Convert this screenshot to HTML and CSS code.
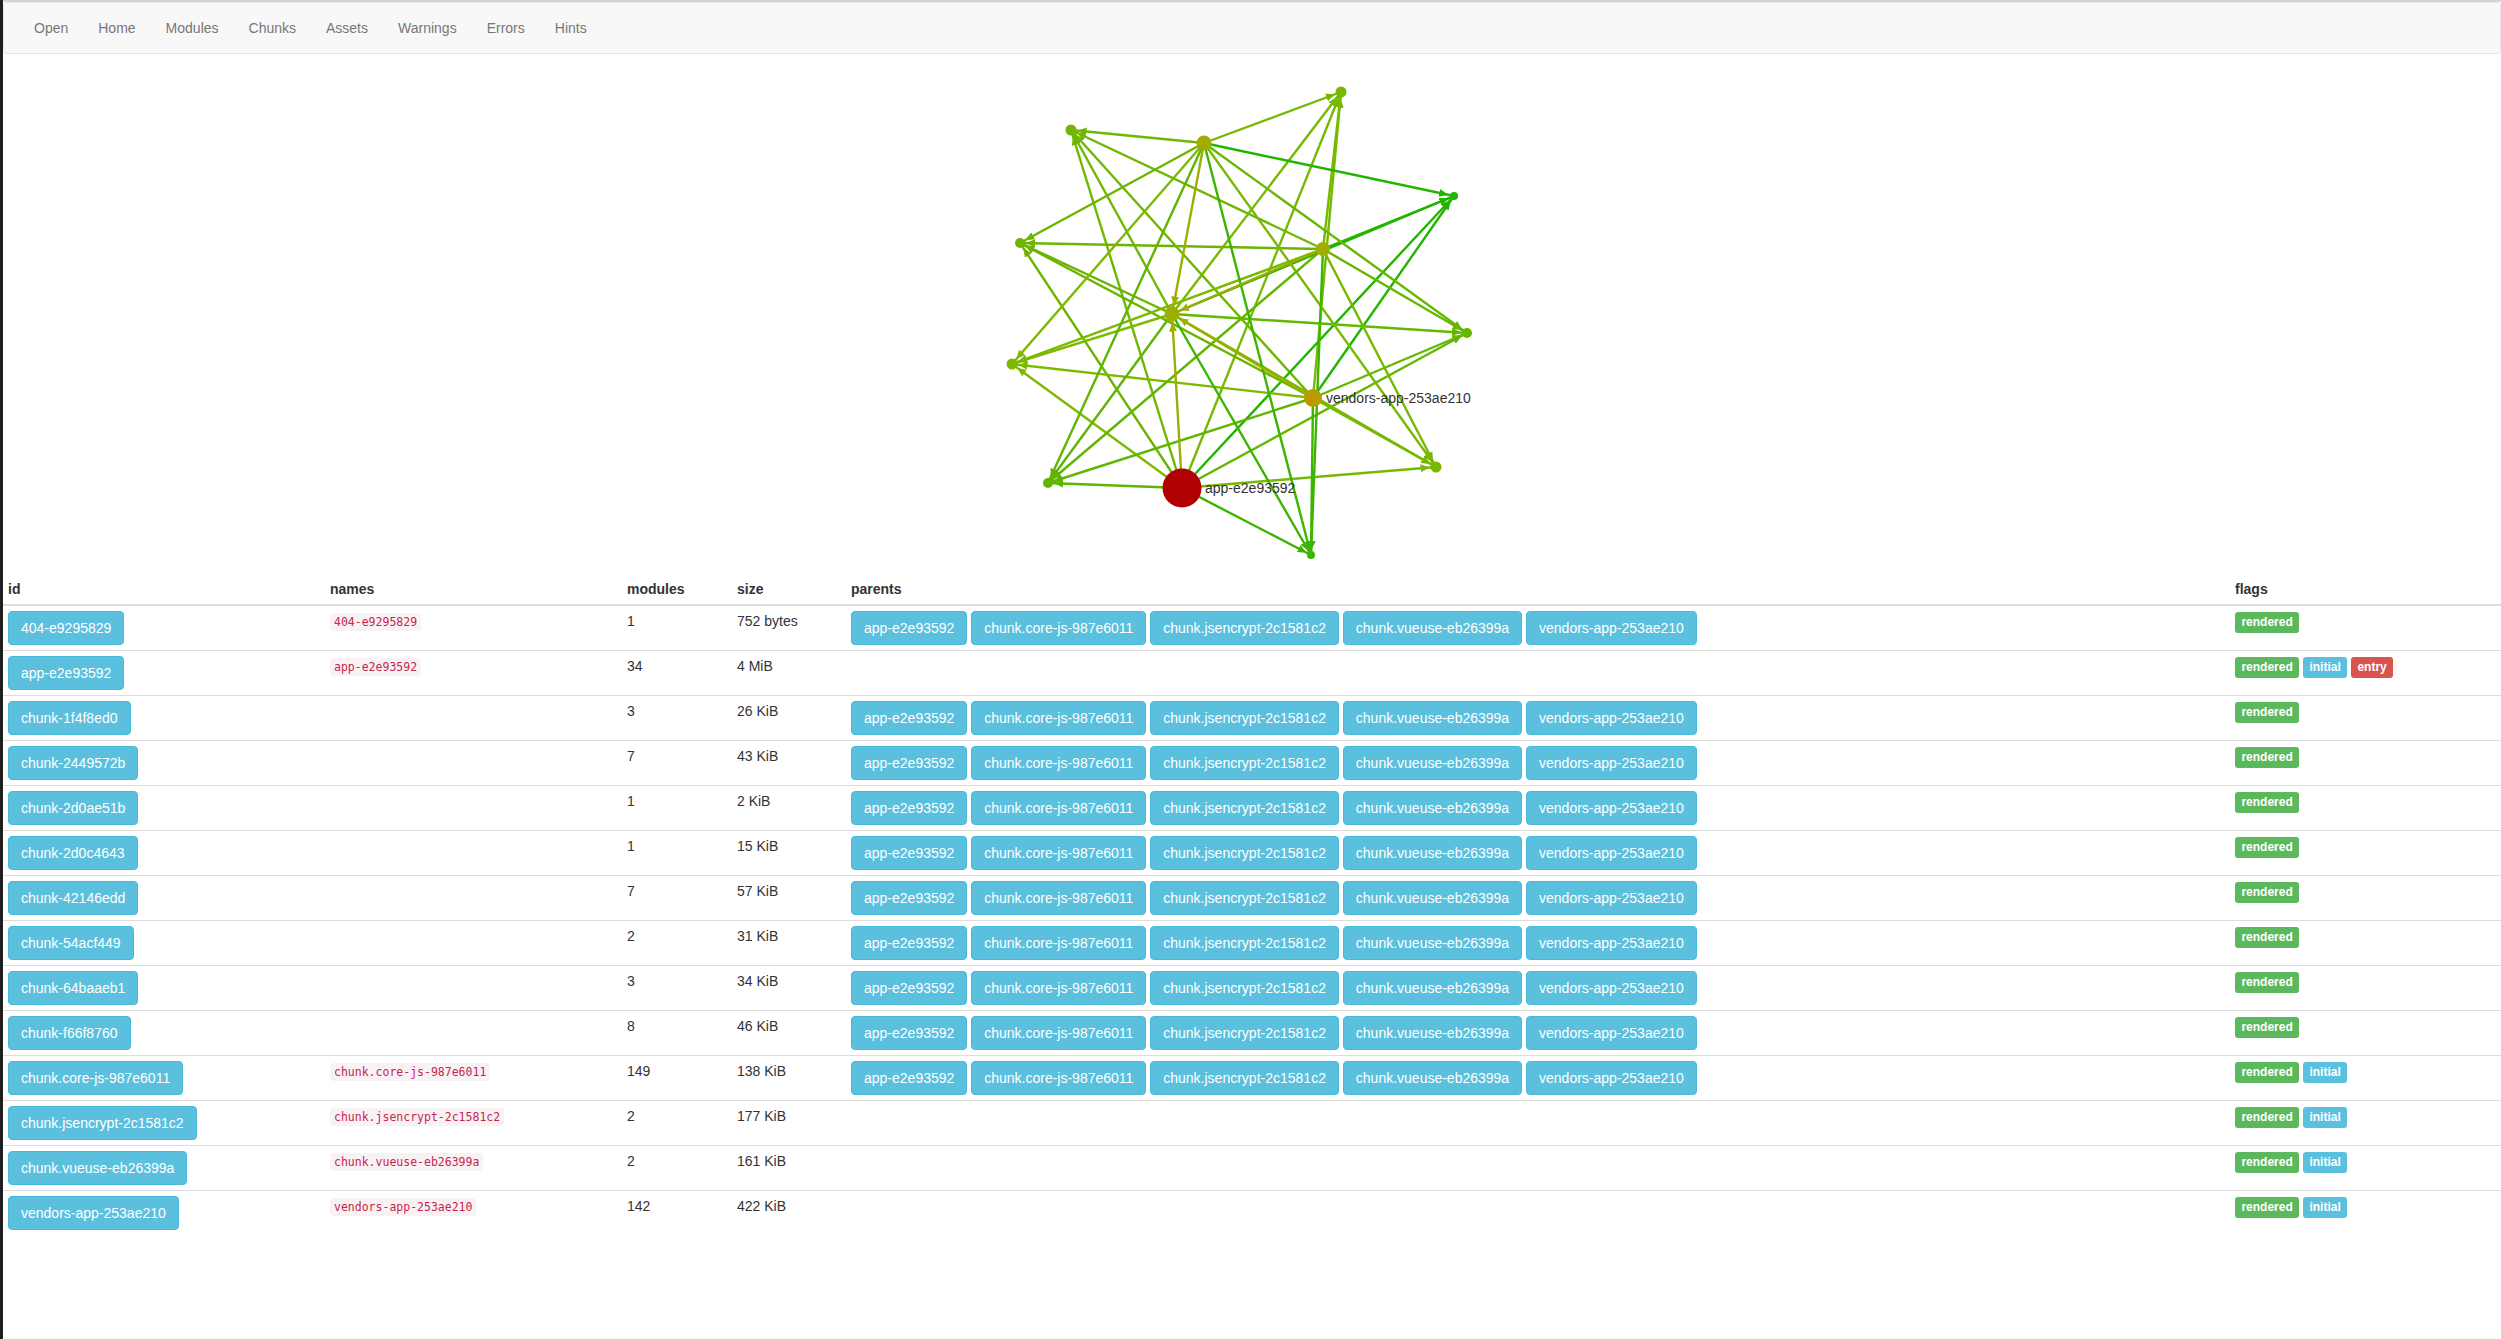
FILE: index.html
```html
<!DOCTYPE html>
<html lang="en">
<head>
    <meta charset="UTF-8">
    <meta name="viewport" content="width=device-width, initial-scale=1.0">
    <title>Chunks</title>
    <link rel="stylesheet" href="styles.css">
</head>
<body>
    <div class="top-line"></div>
    <nav class="navbar">
        <ul class="nav-list">
            <li><a href="#">Open</a></li>
            <li><a href="#">Home</a></li>
            <li><a href="#">Modules</a></li>
            <li><a href="#">Chunks</a></li>
            <li><a href="#">Assets</a></li>
            <li><a href="#">Warnings</a></li>
            <li><a href="#">Errors</a></li>
            <li><a href="#">Hints</a></li>
        </ul>
    </nav>

    <svg class="chart" width="2498" height="520" viewBox="3 54 2498 520">
        <defs>
            <marker id="arrow-n1" class="to-n1" markerUnits="userSpaceOnUse" markerWidth="10" markerHeight="10" viewBox="0 0 10 10" refX="15.5" refY="5" orient="auto"><path d="M0 1L9 5L0 9z"/></marker>
            <marker id="arrow-n2" class="to-n2" markerUnits="userSpaceOnUse" markerWidth="10" markerHeight="10" viewBox="0 0 10 10" refX="15.5" refY="5" orient="auto"><path d="M0 1L9 5L0 9z"/></marker>
            <marker id="arrow-n4" class="to-n4" markerUnits="userSpaceOnUse" markerWidth="10" markerHeight="10" viewBox="0 0 10 10" refX="15" refY="5" orient="auto"><path d="M0 1L9 5L0 9z"/></marker>
            <marker id="arrow-n5" class="to-n5" markerUnits="userSpaceOnUse" markerWidth="10" markerHeight="10" viewBox="0 0 10 10" refX="15" refY="5" orient="auto"><path d="M0 1L9 5L0 9z"/></marker>
            <marker id="arrow-n7" class="to-n7" markerUnits="userSpaceOnUse" markerWidth="10" markerHeight="10" viewBox="0 0 10 10" refX="15" refY="5" orient="auto"><path d="M0 1L9 5L0 9z"/></marker>
            <marker id="arrow-n8" class="to-n8" markerUnits="userSpaceOnUse" markerWidth="10" markerHeight="10" viewBox="0 0 10 10" refX="17.5" refY="5" orient="auto"><path d="M0 1L9 5L0 9z"/></marker>
            <marker id="arrow-n9" class="to-n9" markerUnits="userSpaceOnUse" markerWidth="10" markerHeight="10" viewBox="0 0 10 10" refX="15.5" refY="5" orient="auto"><path d="M0 1L9 5L0 9z"/></marker>
            <marker id="arrow-n11" class="to-n11" markerUnits="userSpaceOnUse" markerWidth="10" markerHeight="10" viewBox="0 0 10 10" refX="15.5" refY="5" orient="auto"><path d="M0 1L9 5L0 9z"/></marker>
            <marker id="arrow-n12" class="to-n12" markerUnits="userSpaceOnUse" markerWidth="10" markerHeight="10" viewBox="0 0 10 10" refX="15" refY="5" orient="auto"><path d="M0 1L9 5L0 9z"/></marker>
            <marker id="arrow-n14" class="to-n14" markerUnits="userSpaceOnUse" markerWidth="10" markerHeight="10" viewBox="0 0 10 10" refX="14" refY="5" orient="auto"><path d="M0 1L9 5L0 9z"/></marker>
        </defs>

        <!-- edges grouped by target, colour comes from the target -->
        <g class="edges to-n1" marker-end="url(#arrow-n1)">
            <line x1="1182" y1="488" x2="1341" y2="92"/>
            <line x1="1313" y1="398" x2="1341" y2="92"/>
            <line x1="1172" y1="314" x2="1341" y2="92"/>
            <line x1="1204" y1="143" x2="1341" y2="92"/>
            <line x1="1323" y1="249" x2="1341" y2="92"/>
        </g>
        <g class="edges to-n2" marker-end="url(#arrow-n2)">
            <line x1="1182" y1="488" x2="1071" y2="130"/>
            <line x1="1313" y1="398" x2="1071" y2="130"/>
            <line x1="1172" y1="314" x2="1071" y2="130"/>
            <line x1="1204" y1="143" x2="1071" y2="130"/>
            <line x1="1323" y1="249" x2="1071" y2="130"/>
        </g>
        <g class="edges to-n4" marker-end="url(#arrow-n4)">
            <line x1="1182" y1="488" x2="1454" y2="196"/>
            <line x1="1313" y1="398" x2="1454" y2="196"/>
            <line x1="1172" y1="314" x2="1454" y2="196"/>
            <line x1="1204" y1="143" x2="1454" y2="196"/>
            <line x1="1323" y1="249" x2="1454" y2="196"/>
        </g>
        <g class="edges to-n5" marker-end="url(#arrow-n5)">
            <line x1="1182" y1="488" x2="1020" y2="243"/>
            <line x1="1313" y1="398" x2="1020" y2="243"/>
            <line x1="1172" y1="314" x2="1020" y2="243"/>
            <line x1="1204" y1="143" x2="1020" y2="243"/>
            <line x1="1323" y1="249" x2="1020" y2="243"/>
        </g>
        <g class="edges to-n7" marker-end="url(#arrow-n7)">
            <line x1="1182" y1="488" x2="1467" y2="333"/>
            <line x1="1313" y1="398" x2="1467" y2="333"/>
            <line x1="1172" y1="314" x2="1467" y2="333"/>
            <line x1="1204" y1="143" x2="1467" y2="333"/>
            <line x1="1323" y1="249" x2="1467" y2="333"/>
        </g>
        <g class="edges to-n9" marker-end="url(#arrow-n9)">
            <line x1="1182" y1="488" x2="1012" y2="364"/>
            <line x1="1313" y1="398" x2="1012" y2="364"/>
            <line x1="1172" y1="314" x2="1012" y2="364"/>
            <line x1="1204" y1="143" x2="1012" y2="364"/>
            <line x1="1323" y1="249" x2="1012" y2="364"/>
        </g>
        <g class="edges to-n11" marker-end="url(#arrow-n11)">
            <line x1="1182" y1="488" x2="1436" y2="467"/>
            <line x1="1313" y1="398" x2="1436" y2="467"/>
            <line x1="1172" y1="314" x2="1436" y2="467"/>
            <line x1="1204" y1="143" x2="1436" y2="467"/>
            <line x1="1323" y1="249" x2="1436" y2="467"/>
        </g>
        <g class="edges to-n12" marker-end="url(#arrow-n12)">
            <line x1="1182" y1="488" x2="1048" y2="483"/>
            <line x1="1313" y1="398" x2="1048" y2="483"/>
            <line x1="1172" y1="314" x2="1048" y2="483"/>
            <line x1="1204" y1="143" x2="1048" y2="483"/>
            <line x1="1323" y1="249" x2="1048" y2="483"/>
        </g>
        <g class="edges to-n14" marker-end="url(#arrow-n14)">
            <line x1="1182" y1="488" x2="1311" y2="555"/>
            <line x1="1313" y1="398" x2="1311" y2="555"/>
            <line x1="1172" y1="314" x2="1311" y2="555"/>
            <line x1="1204" y1="143" x2="1311" y2="555"/>
            <line x1="1323" y1="249" x2="1311" y2="555"/>
        </g>
        <g class="edges to-n8" marker-end="url(#arrow-n8)">
            <line x1="1182" y1="488" x2="1172" y2="314"/>
            <line x1="1313" y1="398" x2="1172" y2="314"/>
            <line x1="1204" y1="143" x2="1172" y2="314"/>
            <line x1="1323" y1="249" x2="1172" y2="314"/>
        </g>

        <circle class="to-n1" cx="1341" cy="92" r="5.5"/>
        <circle class="to-n2" cx="1071" cy="130" r="5.5"/>
        <circle class="node-n3" cx="1204" cy="143" r="7.5"/>
        <circle class="to-n4" cx="1454" cy="196" r="4"/>
        <circle class="to-n5" cx="1020" cy="243" r="5"/>
        <circle class="node-n6" cx="1323" cy="249" r="7"/>
        <circle class="to-n7" cx="1467" cy="333" r="5"/>
        <circle class="to-n8" cx="1172" cy="314" r="7.5"/>
        <circle class="to-n9" cx="1012" cy="364" r="5.5"/>
        <circle class="node-vendors" cx="1313" cy="398" r="9"/>
        <circle class="to-n11" cx="1436" cy="467" r="5.5"/>
        <circle class="to-n12" cx="1048" cy="483" r="5"/>
        <circle class="node-app" cx="1182" cy="488" r="19.5"/>
        <circle class="to-n14" cx="1311" cy="555" r="4"/>

        <text class="node-label" x="1326" y="403">vendors-app-253ae210</text>
        <text class="node-label" x="1205" y="493">app-e2e93592</text>
    </svg>

    <table class="chunk-table">
        <colgroup>
            <col class="col-id">
            <col class="col-names">
            <col class="col-modules">
            <col class="col-size">
            <col class="col-parents">
            <col class="col-flags">
        </colgroup>
        <thead>
            <tr>
                <th>id</th>
                <th>names</th>
                <th>modules</th>
                <th>size</th>
                <th>parents</th>
                <th>flags</th>
            </tr>
        </thead>
        <tbody>
            <tr>
                <td><a class="btn" href="#">404-e9295829</a></td>
                <td><code>404-e9295829</code></td>
                <td>1</td>
                <td>752 bytes</td>
                <td>
                    <a class="btn" href="#">app-e2e93592</a>
                    <a class="btn" href="#">chunk.core-js-987e6011</a>
                    <a class="btn" href="#">chunk.jsencrypt-2c1581c2</a>
                    <a class="btn" href="#">chunk.vueuse-eb26399a</a>
                    <a class="btn" href="#">vendors-app-253ae210</a>
                </td>
                <td><span class="label label-success">rendered</span></td>
            </tr>
            <tr>
                <td><a class="btn" href="#">app-e2e93592</a></td>
                <td><code>app-e2e93592</code></td>
                <td>34</td>
                <td>4 MiB</td>
                <td></td>
                <td>
                    <span class="label label-success">rendered</span>
                    <span class="label label-info">initial</span>
                    <span class="label label-danger">entry</span>
                </td>
            </tr>
            <tr>
                <td><a class="btn" href="#">chunk-1f4f8ed0</a></td>
                <td></td>
                <td>3</td>
                <td>26 KiB</td>
                <td>
                    <a class="btn" href="#">app-e2e93592</a>
                    <a class="btn" href="#">chunk.core-js-987e6011</a>
                    <a class="btn" href="#">chunk.jsencrypt-2c1581c2</a>
                    <a class="btn" href="#">chunk.vueuse-eb26399a</a>
                    <a class="btn" href="#">vendors-app-253ae210</a>
                </td>
                <td><span class="label label-success">rendered</span></td>
            </tr>
            <tr>
                <td><a class="btn" href="#">chunk-2449572b</a></td>
                <td></td>
                <td>7</td>
                <td>43 KiB</td>
                <td>
                    <a class="btn" href="#">app-e2e93592</a>
                    <a class="btn" href="#">chunk.core-js-987e6011</a>
                    <a class="btn" href="#">chunk.jsencrypt-2c1581c2</a>
                    <a class="btn" href="#">chunk.vueuse-eb26399a</a>
                    <a class="btn" href="#">vendors-app-253ae210</a>
                </td>
                <td><span class="label label-success">rendered</span></td>
            </tr>
            <tr>
                <td><a class="btn" href="#">chunk-2d0ae51b</a></td>
                <td></td>
                <td>1</td>
                <td>2 KiB</td>
                <td>
                    <a class="btn" href="#">app-e2e93592</a>
                    <a class="btn" href="#">chunk.core-js-987e6011</a>
                    <a class="btn" href="#">chunk.jsencrypt-2c1581c2</a>
                    <a class="btn" href="#">chunk.vueuse-eb26399a</a>
                    <a class="btn" href="#">vendors-app-253ae210</a>
                </td>
                <td><span class="label label-success">rendered</span></td>
            </tr>
            <tr>
                <td><a class="btn" href="#">chunk-2d0c4643</a></td>
                <td></td>
                <td>1</td>
                <td>15 KiB</td>
                <td>
                    <a class="btn" href="#">app-e2e93592</a>
                    <a class="btn" href="#">chunk.core-js-987e6011</a>
                    <a class="btn" href="#">chunk.jsencrypt-2c1581c2</a>
                    <a class="btn" href="#">chunk.vueuse-eb26399a</a>
                    <a class="btn" href="#">vendors-app-253ae210</a>
                </td>
                <td><span class="label label-success">rendered</span></td>
            </tr>
            <tr>
                <td><a class="btn" href="#">chunk-42146edd</a></td>
                <td></td>
                <td>7</td>
                <td>57 KiB</td>
                <td>
                    <a class="btn" href="#">app-e2e93592</a>
                    <a class="btn" href="#">chunk.core-js-987e6011</a>
                    <a class="btn" href="#">chunk.jsencrypt-2c1581c2</a>
                    <a class="btn" href="#">chunk.vueuse-eb26399a</a>
                    <a class="btn" href="#">vendors-app-253ae210</a>
                </td>
                <td><span class="label label-success">rendered</span></td>
            </tr>
            <tr>
                <td><a class="btn" href="#">chunk-54acf449</a></td>
                <td></td>
                <td>2</td>
                <td>31 KiB</td>
                <td>
                    <a class="btn" href="#">app-e2e93592</a>
                    <a class="btn" href="#">chunk.core-js-987e6011</a>
                    <a class="btn" href="#">chunk.jsencrypt-2c1581c2</a>
                    <a class="btn" href="#">chunk.vueuse-eb26399a</a>
                    <a class="btn" href="#">vendors-app-253ae210</a>
                </td>
                <td><span class="label label-success">rendered</span></td>
            </tr>
            <tr>
                <td><a class="btn" href="#">chunk-64baaeb1</a></td>
                <td></td>
                <td>3</td>
                <td>34 KiB</td>
                <td>
                    <a class="btn" href="#">app-e2e93592</a>
                    <a class="btn" href="#">chunk.core-js-987e6011</a>
                    <a class="btn" href="#">chunk.jsencrypt-2c1581c2</a>
                    <a class="btn" href="#">chunk.vueuse-eb26399a</a>
                    <a class="btn" href="#">vendors-app-253ae210</a>
                </td>
                <td><span class="label label-success">rendered</span></td>
            </tr>
            <tr>
                <td><a class="btn" href="#">chunk-f66f8760</a></td>
                <td></td>
                <td>8</td>
                <td>46 KiB</td>
                <td>
                    <a class="btn" href="#">app-e2e93592</a>
                    <a class="btn" href="#">chunk.core-js-987e6011</a>
                    <a class="btn" href="#">chunk.jsencrypt-2c1581c2</a>
                    <a class="btn" href="#">chunk.vueuse-eb26399a</a>
                    <a class="btn" href="#">vendors-app-253ae210</a>
                </td>
                <td><span class="label label-success">rendered</span></td>
            </tr>
            <tr>
                <td><a class="btn" href="#">chunk.core-js-987e6011</a></td>
                <td><code>chunk.core-js-987e6011</code></td>
                <td>149</td>
                <td>138 KiB</td>
                <td>
                    <a class="btn" href="#">app-e2e93592</a>
                    <a class="btn" href="#">chunk.core-js-987e6011</a>
                    <a class="btn" href="#">chunk.jsencrypt-2c1581c2</a>
                    <a class="btn" href="#">chunk.vueuse-eb26399a</a>
                    <a class="btn" href="#">vendors-app-253ae210</a>
                </td>
                <td>
                    <span class="label label-success">rendered</span>
                    <span class="label label-info">initial</span>
                </td>
            </tr>
            <tr>
                <td><a class="btn" href="#">chunk.jsencrypt-2c1581c2</a></td>
                <td><code>chunk.jsencrypt-2c1581c2</code></td>
                <td>2</td>
                <td>177 KiB</td>
                <td></td>
                <td>
                    <span class="label label-success">rendered</span>
                    <span class="label label-info">initial</span>
                </td>
            </tr>
            <tr>
                <td><a class="btn" href="#">chunk.vueuse-eb26399a</a></td>
                <td><code>chunk.vueuse-eb26399a</code></td>
                <td>2</td>
                <td>161 KiB</td>
                <td></td>
                <td>
                    <span class="label label-success">rendered</span>
                    <span class="label label-info">initial</span>
                </td>
            </tr>
            <tr>
                <td><a class="btn" href="#">vendors-app-253ae210</a></td>
                <td><code>vendors-app-253ae210</code></td>
                <td>142</td>
                <td>422 KiB</td>
                <td></td>
                <td>
                    <span class="label label-success">rendered</span>
                    <span class="label label-info">initial</span>
                </td>
            </tr>
        </tbody>
    </table>
</body>
</html>
```

FILE: styles.css
```css
* {
    box-sizing: border-box;
}
body {
    margin: 0;
    min-height: 100vh;
    border-left: 3px solid #1e1e1e;
    font-family: "Liberation Sans", Arial, sans-serif;
    font-size: 14px;
    line-height: 20px;
    color: #333;
    background-color: white;
}
.top-line {
    height: 2px;
    background-color: #d4d4d4;
}

/* navbar */
.navbar {
    height: 52px;
    background-color: #f8f8f8;
    border: 1px solid #e7e7e7;
    border-radius: 4px;
    padding: 0 15px;
}
.nav-list {
    display: flex;
    list-style: none;
    margin: 0;
    padding: 0;
}
.nav-list a {
    display: block;
    padding: 15px;
    color: #777;
    text-decoration: none;
}

/* chunk graph */
.chart {
    display: block;
}
.edges {
    stroke-width: 2.4;
    fill: none;
}
.edges.to-n1 { stroke: #76b900; }
.edges.to-n2 { stroke: #6fb700; }
.edges.to-n4 { stroke: #22b500; }
.edges.to-n5 { stroke: #6db400; }
.edges.to-n7 { stroke: #64b800; }
.edges.to-n8 { stroke: #9dae00; }
.edges.to-n9 { stroke: #7cb900; }
.edges.to-n11 { stroke: #77b800; }
.edges.to-n12 { stroke: #5fb500; }
.edges.to-n14 { stroke: #3bb500; }
.to-n1 { fill: #76b900; }
.to-n2 { fill: #6fb700; }
.to-n4 { fill: #22b500; }
.to-n5 { fill: #6db400; }
.to-n7 { fill: #64b800; }
.to-n8 { fill: #9dae00; }
.to-n9 { fill: #7cb900; }
.to-n11 { fill: #77b800; }
.to-n12 { fill: #5fb500; }
.to-n14 { fill: #3bb500; }
.node-n3 { fill: #a0ac00; }
.node-n6 { fill: #9fae00; }
.node-vendors { fill: #b99b00; }
.node-app { fill: #b00000; }
.node-label {
    font-size: 14px;
    fill: #333;
}

/* table */
.chunk-table {
    width: 100%;
    table-layout: fixed;
    border-collapse: separate;
    border-spacing: 0;
}
.col-id { width: 322px; }
.col-names { width: 297px; }
.col-modules { width: 110px; }
.col-size { width: 114px; }
.col-parents { width: 1384px; }
.chunk-table th,
.chunk-table td {
    padding: 5px;
    text-align: left;
    vertical-align: top;
}
.chunk-table th {
    border-bottom: 2px solid #ddd;
    color: #333;
}
.chunk-table td {
    border-top: 1px solid #ddd;
}
.chunk-table tbody tr:first-child td {
    border-top: 0;
}
.btn {
    display: inline-block;
    padding: 6px 12px;
    vertical-align: middle;
    white-space: nowrap;
    color: white;
    text-decoration: none;
    background-color: #5bc0de;
    border: 1px solid #46b8da;
    border-radius: 4px;
}
code {
    padding: 2px 4px;
    font-family: "DejaVu Sans Mono", monospace;
    font-size: 11.5px;
    color: #c7254e;
    background-color: #f9f2f4;
    border-radius: 4px;
}
.label {
    display: inline;
    padding: 3px 6.4px 4px;
    font-size: 12px;
    font-weight: bold;
    line-height: 1;
    color: white;
    white-space: nowrap;
    border-radius: 3px;
}
.label-success { background-color: #5cb85c; }
.label-info { background-color: #5bc0de; }
.label-danger { background-color: #d9534f; }
```
